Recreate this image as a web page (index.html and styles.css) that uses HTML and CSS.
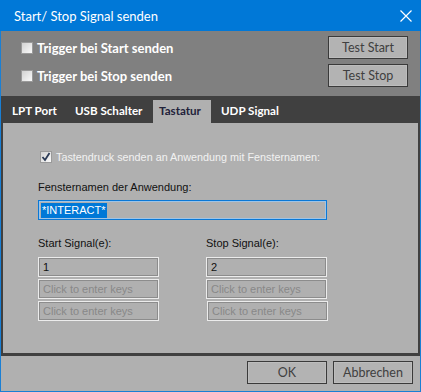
FILE: index.html
```html
<!DOCTYPE html>
<html>
<head>
<meta charset="utf-8">
<link rel="stylesheet" href="styles.css">
</head>
<body>
<div class="window">
  <div class="titlebar">
    <span class="title">Start/ Stop Signal senden</span>
    <svg class="close" width="12" height="12" viewBox="0 0 12 12"><path d="M0.5 0.5 L11.5 11.5 M11.5 0.5 L0.5 11.5" stroke="#fff" stroke-width="1.2" fill="none"/></svg>
  </div>
  <div class="top">
    <div class="toprow">
      <label class="trig"><span class="cb"></span>Trigger bei Start senden</label>
      <button class="btn">Test Start</button>
    </div>
    <div class="toprow">
      <label class="trig"><span class="cb"></span>Trigger bei Stop senden</label>
      <button class="btn">Test Stop</button>
    </div>
  </div>
  <div class="tabs">
    <div class="tab t1">LPT Port</div>
    <div class="tab t2">USB Schalter</div>
    <div class="tab t3 active">Tastatur</div>
    <div class="tab t4">UDP Signal</div>
  </div>
  <div class="panel">
    <label class="send"><span class="cb checked"><svg width="10" height="10" viewBox="0 0 10 10"><path d="M1.5 5 L4 8 L8.5 1" stroke="#2b3a55" stroke-width="1.8" fill="none"/></svg></span>Tastendruck senden an Anwendung mit Fensternamen:</label>
    <div class="lbl">Fensternamen der Anwendung:</div>
    <div class="field main"><span class="sel">*INTERACT*</span></div>
    <div class="cols">
      <div class="col">
        <div class="lbl2">Start Signal(e):</div>
        <div class="field key">1</div>
        <div class="field key ph">Click to enter keys</div>
        <div class="field key ph">Click to enter keys</div>
      </div>
      <div class="col col2">
        <div class="lbl2">Stop Signal(e):</div>
        <div class="field key">2</div>
        <div class="field key ph">Click to enter keys</div>
        <div class="field key ph shift">Click to enter keys</div>
      </div>
    </div>
  </div>
  <div class="bottom">
    <button class="btn">OK</button>
    <button class="btn">Abbrechen</button>
  </div>
</div>
</body>
</html>
```
FILE: styles.css
```css
html, body { margin: 0; padding: 0; }
body { width: 421px; height: 392px; overflow: hidden; font-family: Lato, "Open Sans", sans-serif; font-size: 12px; }
.window { width: 421px; height: 392px; box-sizing: border-box; border: 1px solid #1a7fd4; border-top: none; display: flex; flex-direction: column; background: #b0b0b0; }
.titlebar { height: 31px; background: #0078d7; display: flex; align-items: center; justify-content: space-between; padding: 0 9px 0 14px; margin: 0 -1px; flex: none; }
.title { color: #fff; font-size: 13px; padding-top: 1px; }
.close { display: block; }
.top { background: #808080; height: 65px; box-sizing: border-box; padding: 5px 12px 0 20px; display: flex; flex-direction: column; gap: 5px; flex: none; }
.toprow { display: flex; align-items: center; justify-content: space-between; height: 23px; }
.trig { color: #fff; font-weight: bold; font-size: 13px; display: flex; align-items: center; gap: 4px; }
.cb { width: 10px; height: 10px; border: 1px solid #9a9a9a; background: linear-gradient(135deg, #d2d2d2, #fafafa); display: inline-flex; align-items: center; justify-content: center; flex: none; }
.btn { width: 80px; height: 23px; box-sizing: border-box; background: #b3b3b3; border: 1px solid #3a3a3a; box-shadow: inset 0 0 0 1px #bdbdbd; color: #404040; font-family: Lato, "Open Sans", sans-serif; font-size: 12.5px; padding: 0; }
.tabs { background: #404040; height: 27px; box-sizing: border-box; display: flex; align-items: flex-end; padding-left: 5px; flex: none; }
.tab { height: 23px; box-sizing: border-box; color: #fff; font-weight: bold; font-size: 11.6px; padding: 4px 0 0 6px; }
.t1 { width: 63px; }
.t2 { width: 84px; }
.t3 { width: 58px; }
.t4 { padding-left: 10px; }
.tab.active { background: #b0b0b0; color: #22223a; }
.panel { flex: none; height: 233px; box-sizing: border-box; background: #b0b0b0; border: 2px solid #404040; border-top: none; border-bottom-width: 3px; padding: 27px 0 0 35px; font-family: "Liberation Sans", Arial, sans-serif; font-size: 11px; }
.send { display: flex; align-items: center; gap: 4px; color: #f2f2f2; margin-left: 2px; height: 12px; padding-top: 1px; font-size: 10.8px; }
.cb.checked { width: 10px; height: 10px; }
.lbl { color: #111; margin-top: 18px; height: 15px; }
.field { box-sizing: border-box; border: 1px solid #ececec; box-shadow: inset 0 0 0 1px #8c8c8c; background: #b0b0b0; height: 20px; display: flex; align-items: center; padding-left: 4px; color: #111; }
.main { width: 289px; margin-top: 4px; border-color: #0a78d6; box-shadow: inset 0 0 0 1px #9fc4e6; padding-left: 2px; font-size: 11px; }
.sel { background: #0078d7; color: #fff; height: 15px; line-height: 15px; padding: 0 1px; }
.cols { display: flex; margin-top: 17px; }
.col { width: 121px; display: flex; flex-direction: column; gap: 2px; }
.col2 { margin-left: 47px; }
.lbl2 { color: #111; height: 16px; margin-bottom: 2px; }
.key { width: 121px; height: 20px; font-size: 11px; }
.ph { color: #888; }
.shift { margin-left: 1px; }
.bottom { flex: 1; display: flex; justify-content: flex-end; gap: 6px; padding: 5px 7px 0 0; }
```
